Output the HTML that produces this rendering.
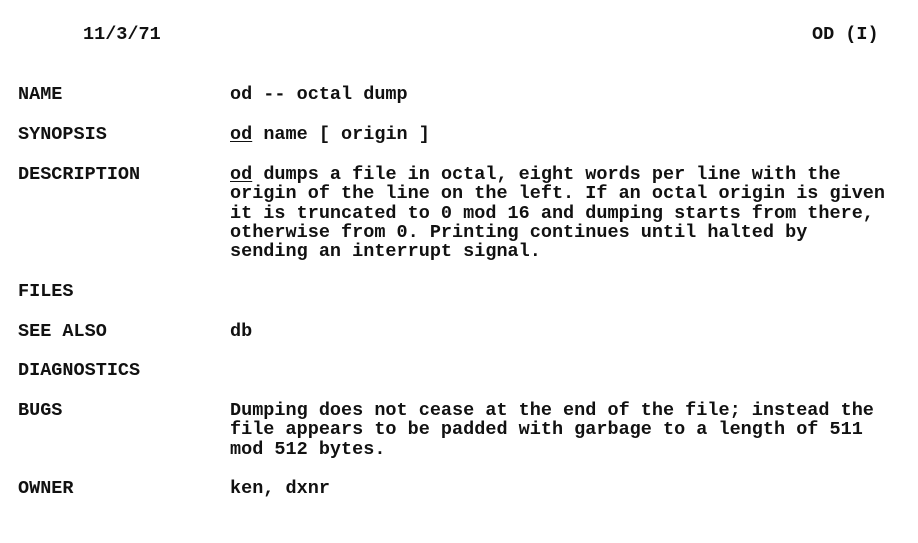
<!DOCTYPE html>
<html><head><meta charset="utf-8"><style>
html,body{margin:0;padding:0;background:#fff;width:918px;height:543px;overflow:hidden}
body{position:relative;font-family:"Liberation Mono","Courier New",monospace;font-weight:bold;font-size:18.5px;color:#111}
div{position:absolute;line-height:20px;white-space:pre}
u{text-decoration:underline;text-underline-offset:2px}
</style></head><body>
<div style="left:83px;top:25px">11/3/71</div>
<div style="left:812px;top:25px">OD (I)</div>
<div style="left:18px;top:85px">NAME</div>
<div style="left:230px;top:85px">od -- octal dump</div>
<div style="left:18px;top:125px">SYNOPSIS</div>
<div style="left:230px;top:125px"><u>od</u> name [ origin ]</div>
<div style="left:18px;top:165px">DESCRIPTION</div>
<div style="left:230px;top:165px;line-height:19.3px"><u>od</u> dumps a file in octal, eight words per line with the
origin of the line on the left. If an octal origin is given
it is truncated to 0 mod 16 and dumping starts from there,
otherwise from 0. Printing continues until halted by
sending an interrupt signal.</div>
<div style="left:18px;top:282px">FILES</div>
<div style="left:18px;top:322px">SEE ALSO</div>
<div style="left:230px;top:322px">db</div>
<div style="left:18px;top:361px">DIAGNOSTICS</div>
<div style="left:18px;top:401px">BUGS</div>
<div style="left:230px;top:401px;line-height:19.3px">Dumping does not cease at the end of the file; instead the
file appears to be padded with garbage to a length of 511
mod 512 bytes.</div>
<div style="left:18px;top:479px">OWNER</div>
<div style="left:230px;top:479px">ken, dxnr</div>
</body></html>
